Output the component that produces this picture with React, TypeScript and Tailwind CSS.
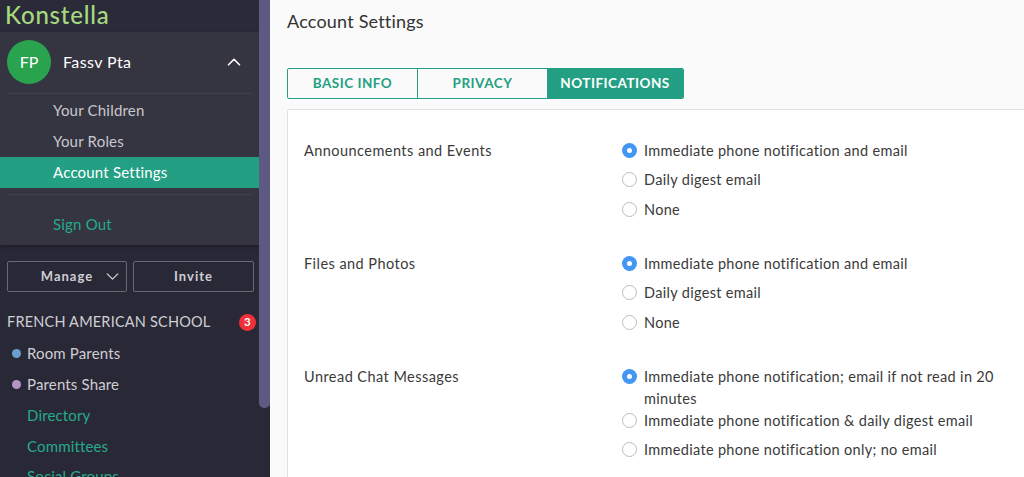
import { ChevronDown, ChevronUp } from "lucide-react";

const font = "font-['Lato','Noto_Sans',sans-serif]";

type Group = {
  title: string;
  top: string;
  options: string[];
};

const groups: Group[] = [
  {
    title: "Announcements and Events",
    top: "mt-[30px]",
    options: ["Immediate phone notification and email", "Daily digest email", "None"],
  },
  {
    title: "Files and Photos",
    top: "mt-[24.6px]",
    options: ["Immediate phone notification and email", "Daily digest email", "None"],
  },
  {
    title: "Unread Chat Messages",
    top: "mt-[24.6px]",
    options: [
      "Immediate phone notification; email if not read in 20 minutes",
      "Immediate phone notification & daily digest email",
      "Immediate phone notification only; no email",
    ],
  },
];

function Radio({ checked }: { checked: boolean }) {
  if (checked) {
    return (
      <span className="mt-[3px] flex h-[15px] w-[15px] shrink-0 items-center justify-center rounded-full bg-[#4296f4]">
        <span className="h-[5px] w-[5px] rounded-full bg-white" />
      </span>
    );
  }
  return <span className="mt-[3px] h-[15px] w-[15px] shrink-0 rounded-full border border-[#bdbdbd] bg-white" />;
}

function SettingGroup({ group }: { group: Group }) {
  return (
    <div className={`flex ${group.top}`}>
      <div className="w-[318px] shrink-0 text-[14.5px] leading-[22px] tracking-[0.45px] text-[#3a3a3a]">
        {group.title}
      </div>
      <div className="flex w-[395px] flex-col">
        {group.options.map((option) => (
          <div key={option} className="flex min-h-[29.4px] gap-[7px]">
            <Radio checked={option === group.options[0]} />
            <span className="text-[14.5px] leading-[22px] tracking-[0.32px] text-[#3a3a3a]">{option}</span>
          </div>
        ))}
      </div>
    </div>
  );
}

function Sidebar() {
  return (
    <aside className="flex h-[477px] w-[270px] shrink-0 overflow-hidden bg-[#292836]">
      <div className="w-[259px] shrink-0">
        <div className="h-[32px] bg-[#2b2a39] pl-[5px] text-[24px] font-medium leading-[30px] tracking-[0.8px] text-[#a6d97f]">
          Konstella
        </div>
        <div className="h-[213px] bg-[#353441] shadow-[0_2px_4px_rgba(0,0,0,0.3)]">
          <div className="mx-[7px] flex h-[62px] items-center border-b border-[#403f4c] pb-[1px]">
            <div className="flex h-[44px] w-[44px] items-center justify-center rounded-full bg-[#2aa34f] text-[16px] text-white">
              FP
            </div>
            <span className="ml-[12px] text-[16px] tracking-[0.4px] text-white">Fassv Pta</span>
            <ChevronUp className="ml-auto mr-[7px] text-white" size={22} strokeWidth={1.75} />
          </div>
          <div className="pt-[1px] text-[15px] tracking-[0.2px] text-[#c9c8cd]">
            <div className="flex h-[31px] items-center pl-[53px]">Your Children</div>
            <div className="flex h-[31px] items-center pl-[53px]">Your Roles</div>
            <div className="flex h-[31px] items-center bg-[#23a083] pl-[53px] text-white">Account Settings</div>
          </div>
          <div className="mx-[7px] mt-[6px] border-t border-[#403f4c]" />
          <div className="flex h-[59px] items-center pl-[53px] text-[15px] tracking-[0.2px] text-[#25ab8a]">
            Sign Out
          </div>
        </div>
        <div className="ml-[7px] mt-[16px] flex w-[247px] gap-[6px]">
          <button className="flex h-[31px] w-[120px] shrink-0 items-center justify-center gap-[9px] rounded-[2px] border border-[#6a6974] pl-[30px] text-[13px] font-bold tracking-[1px] text-[#cfced3]">
            Manage
            <ChevronDown size={21} strokeWidth={1.5} />
          </button>
          <button className="h-[31px] w-[121px] shrink-0 rounded-[2px] border border-[#6a6974] text-[13px] font-bold tracking-[1px] text-[#cfced3]">
            Invite
          </button>
        </div>
        <div className="mt-[19px] flex h-[22px] items-center justify-between pl-[7px] pr-[3px] text-[14.5px] tracking-[0.2px] text-[#cfced3]">
          <span>FRENCH AMERICAN SCHOOL</span>
          <span className="flex h-[17px] w-[17px] items-center justify-center rounded-full bg-[#f03038] text-[11.5px] font-bold text-white">
            3
          </span>
        </div>
        <div className="mt-[5px] text-[15px] tracking-[0.15px]">
          <div className="flex h-[31px] items-center pl-[12px] text-[#cfced3]">
            <span className="mr-[6px] h-[9px] w-[9px] rounded-full bg-[#6a9fd0]" />
            Room Parents
          </div>
          <div className="flex h-[31px] items-center pl-[12px] text-[#cfced3]">
            <span className="mr-[6px] h-[9px] w-[9px] rounded-full bg-[#b595c5]" />
            Parents Share
          </div>
          <div className="flex h-[31px] items-center pl-[27px] text-[#25ab8a]">Directory</div>
          <div className="flex h-[30px] items-center pl-[27px] text-[#25ab8a]">Committees</div>
          <div className="flex h-[30px] items-center pl-[27px] text-[#25ab8a]">Social Groups</div>
        </div>
      </div>
      <div className="h-[408px] w-[11px] shrink-0 rounded-b-[5px] bg-[#5c5a80]" />
    </aside>
  );
}

export default function App() {
  return (
    <div className={`flex h-[477px] w-[1024px] overflow-hidden bg-[#fafafa] ${font}`}>
      <Sidebar />
      <main className="min-w-0 flex-1 pl-[17px]">
        <h1 className="pt-[9px] text-[18px] font-normal leading-[24px] tracking-[0.2px] text-[#333333]">
          Account Settings
        </h1>
        <div className="mt-[35px] flex h-[31px] w-[397px] overflow-hidden rounded-[2px] border border-[#23a083] text-[13.5px] font-bold tracking-[0.5px]">
          <div className="flex w-[130px] items-center justify-center border-r border-[#23a083] text-[#23a083]">
            BASIC INFO
          </div>
          <div className="flex w-[129px] items-center justify-center text-[#23a083]">PRIVACY</div>
          <div className="flex flex-1 items-center justify-center bg-[#23a083] text-white">NOTIFICATIONS</div>
        </div>
        <section className="mt-[10px] h-[400px] rounded-tl-[2px] border-l border-t border-[#e2e2e2] bg-white pl-[16px]">
          {groups.map((group) => (
            <SettingGroup key={group.title} group={group} />
          ))}
        </section>
      </main>
    </div>
  );
}
